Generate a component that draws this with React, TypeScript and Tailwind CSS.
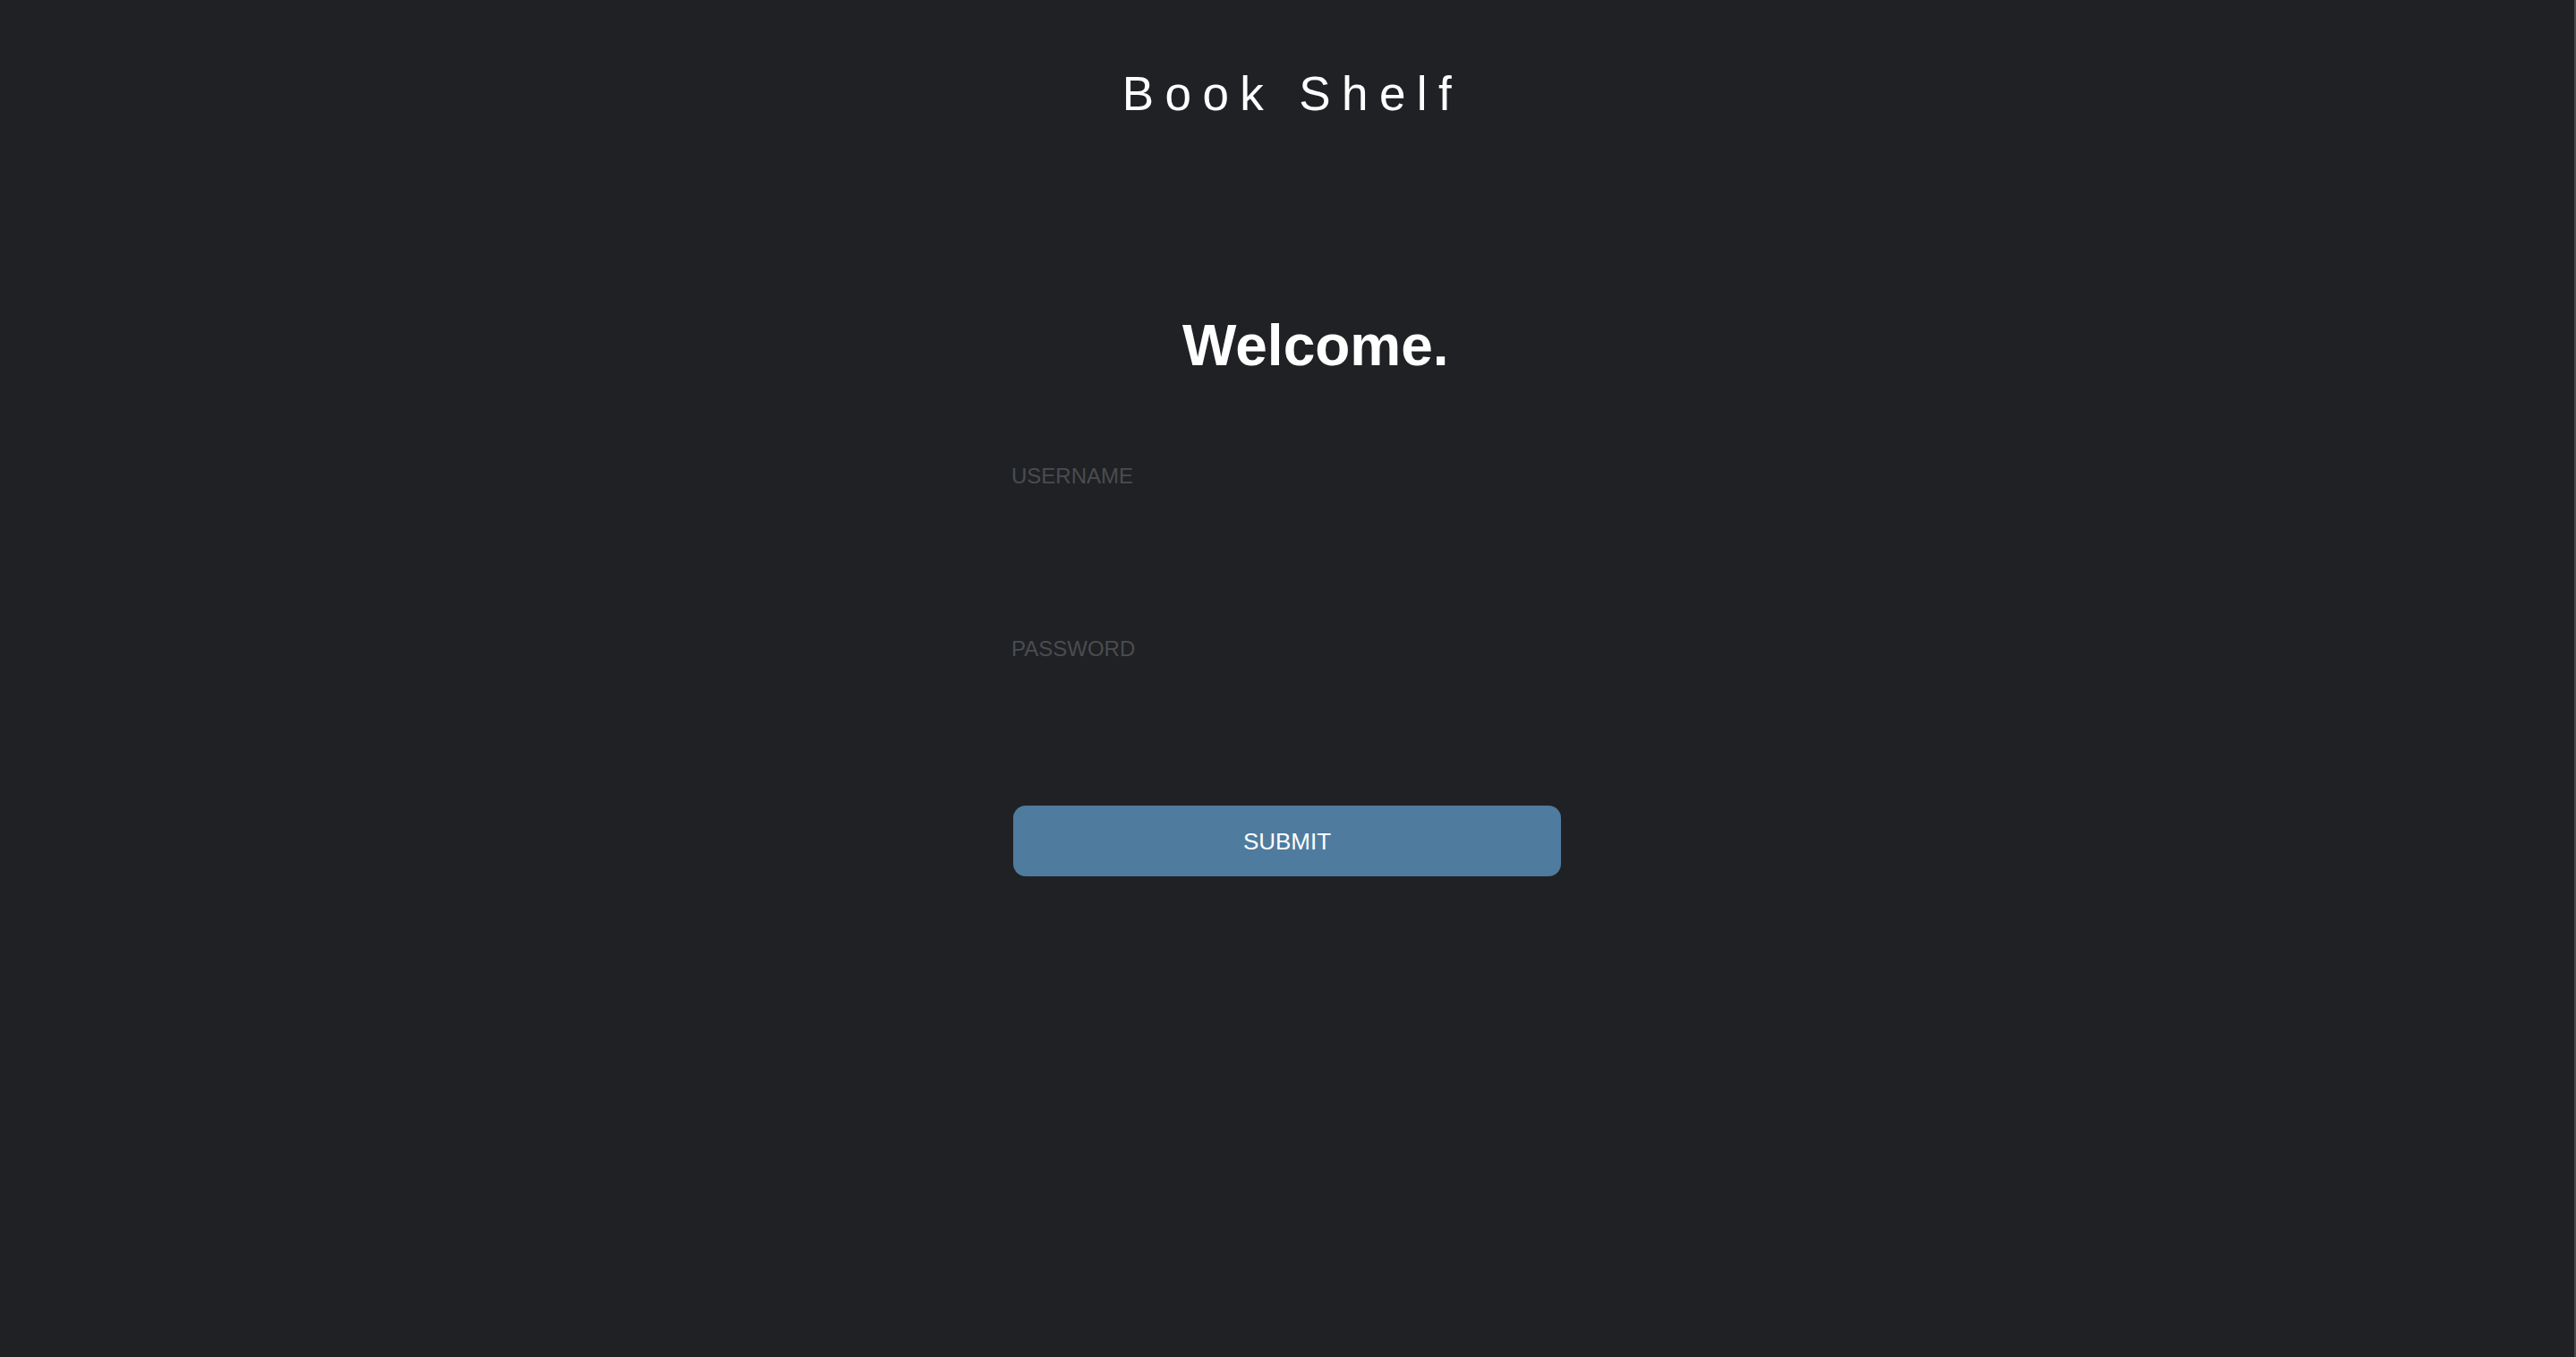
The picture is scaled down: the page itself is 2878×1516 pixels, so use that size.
import React from "react";

export default function App() {
  return (
    <div className="flex h-screen w-full overflow-hidden bg-[#202125]">
      <main className="flex flex-1 flex-col items-center bg-[#202125] pt-[78px]">
        <h1
          className="h-[53px] pl-[12px] text-[53px] leading-[53px] font-normal tracking-[12.4px] text-white"
          style={{ fontFamily: '"Liberation Sans", Arial, sans-serif' }}
        >
          Book Shelf
        </h1>
        <form
          className="mt-[223px] flex w-[612px] flex-col items-start"
          style={{ fontFamily: '"Liberation Sans", Arial, sans-serif' }}
          onSubmit={(e) => e.preventDefault()}
        >
          <h2 className="ml-[189px] h-[64px] text-[64px] leading-[64px] font-bold text-white">
            Welcome.
          </h2>
          <label className="mt-[102px] -ml-[2px] block h-[24px] text-[24px] leading-[24px] text-[#4b4c50]">
            USERNAME
          </label>
          <input
            type="text"
            aria-label="username"
            className="h-[169px] w-[612px] bg-transparent text-white outline-none"
          />
          <label className="-ml-[2px] block h-[24px] text-[24px] leading-[24px] text-[#4b4c50]">
            PASSWORD
          </label>
          <input
            type="password"
            aria-label="password"
            className="h-[139px] w-[612px] bg-transparent text-white outline-none"
          />
          <button
            type="submit"
            className="mt-[24px] flex h-[79px] w-[612px] items-center justify-center rounded-[14px] bg-[#4f7b9e] text-[26px] leading-[26px] text-white"
          >
            SUBMIT
          </button>
        </form>
      </main>
      <div className="w-[2px] shrink-0 bg-[#4a4a4d]" />
    </div>
  );
}
